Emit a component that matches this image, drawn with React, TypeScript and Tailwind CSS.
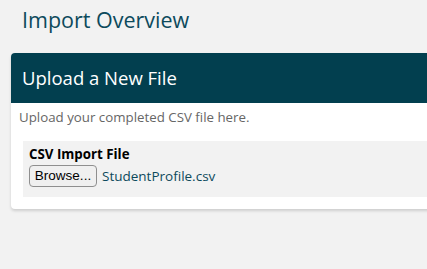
export default function App() {
  return (
    <div className="min-h-[269px] w-[427px] overflow-hidden bg-[#f2f2f2] font-['Open_Sans',sans-serif]">
      <h1 className="pl-[22px] pt-[6px] text-[21.5px] leading-[28px] text-[#0d4a5c]">Import Overview</h1>

      <div className="ml-[11px] mt-[19px] w-[440px] rounded-[4px] bg-white shadow-[0_2px_3px_rgba(0,0,0,0.15)]">
        <div className="flex h-[50px] items-center rounded-t-[4px] bg-[#023f4f] pl-[11px]">
          <h2 className="text-[18.5px] font-medium text-white">Upload a New File</h2>
        </div>

        <div className="pb-[12px] pl-[8px] pt-[5px]">
          <p className="text-[13.3px] leading-[18px] text-[#666666]">Upload your completed CSV file here.</p>

          <div className="mt-[15px] ml-[4px] bg-[#f2f2f2] pb-[10px] pl-[6px] pt-[4px]">
            <div className="text-[13.3px] font-bold leading-[18px] text-black">CSV Import File</div>
            <div className="mt-[2px] flex items-center gap-[5px]">
              <button className="h-[22px] w-[68px] rounded-[4px] border border-[#8f8f8f] bg-[#f0f0f0] font-['Liberation_Sans',sans-serif] text-[13.5px] text-black">
                Browse...
              </button>
              <span className="text-[13.5px] text-[#0d4a5c]">StudentProfile.csv</span>
            </div>
          </div>
        </div>
      </div>
    </div>
  )
}
